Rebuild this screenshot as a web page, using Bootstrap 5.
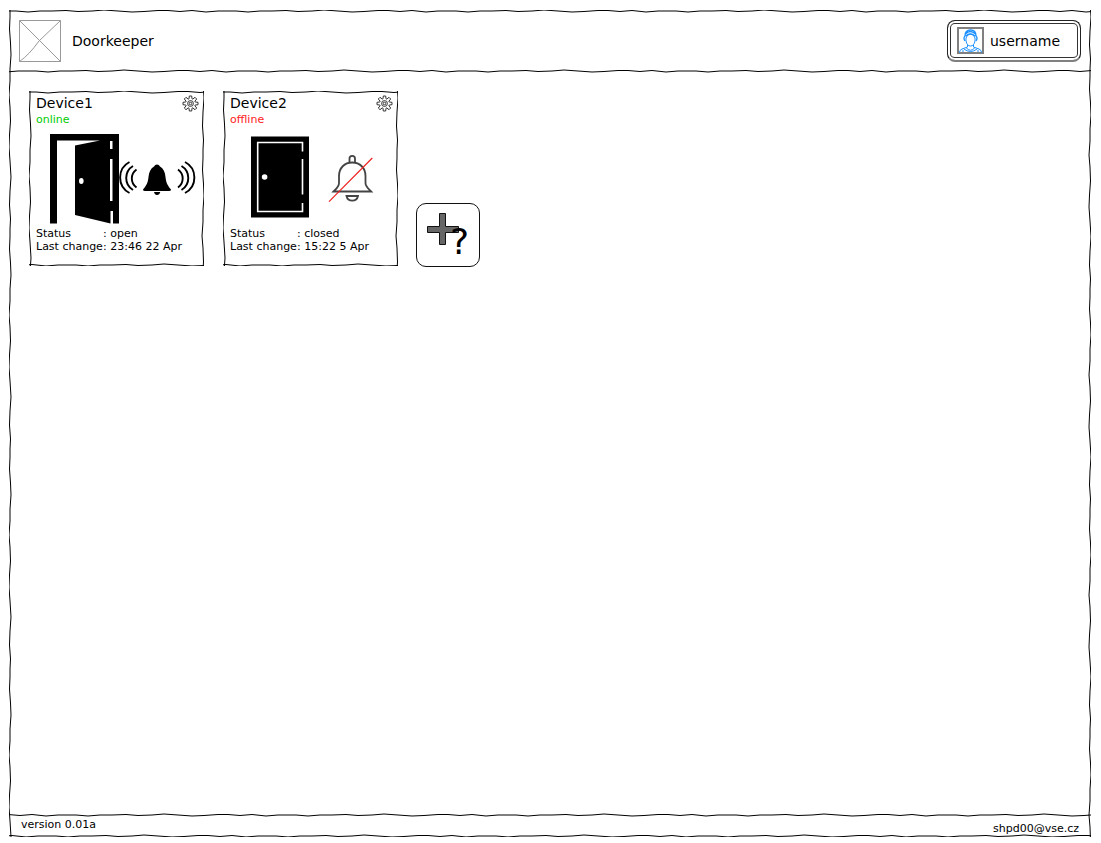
<!DOCTYPE html>
<html lang="en">
<head>
<meta charset="utf-8">
<meta name="viewport" content="width=device-width, initial-scale=1">
<title>Doorkeeper</title>
<link href="https://cdn.jsdelivr.net/npm/bootstrap@5.3.0/dist/css/bootstrap.min.css" rel="stylesheet">
<style>
  :root {
    --wave-h: url("data:image/svg+xml,%3Csvg xmlns='http://www.w3.org/2000/svg' width='220' height='4'%3E%3Cpath d='M0 2H8L20 3L32 2H44L58 1.500L70 2.500L84 2L96 1L110 2L124 3L136 2.500L150 1.500H160L172 2.500L184 1.500L198 3L210 2H220' fill='none' stroke='black'/%3E%3C/svg%3E");
    --wave-v: url("data:image/svg+xml,%3Csvg xmlns='http://www.w3.org/2000/svg' width='4' height='220'%3E%3Cpath d='M2 0V8L1.500 20L2.500 34L3 46L2 60V72L1 86L2 98L2.500 112L1.500 126L1 138L2 152L3 168L2 182L1.500 196L2.500 210L2 220' fill='none' stroke='black'/%3E%3C/svg%3E");
  }
  body { font-family: "DejaVu Sans", Verdana, sans-serif; font-size: 14px; line-height: 18px; color: #000; background: #fff; }
  .page-shell { padding: 9px 9px 5px 8px; }
  .sketch-box { background: var(--wave-h) repeat-x 0 0, var(--wave-h) repeat-x 40px 100%, var(--wave-v) repeat-y 0 0, var(--wave-v) repeat-y 100% 60px; clip-path: inset(1px); }
  .top-bar { min-height: 64px; padding: 11px 11px 9px 10px; background: var(--wave-h) repeat-x 20px 100%; }
  .brand { gap: 10px; }
  .bottom-bar { min-height: 25px; padding: 5px 13px 3px; font-size: 11px; line-height: 13px; background: var(--wave-h) repeat-x 60px 0; }
  .bottom-bar a { color: #000; }
  .device-area { padding: 17px 20px; gap: 17px; }
  .device { width: 177px; min-height: 177px; padding-top: 4px; }
  .device-head { padding: 0 6px 0 8px; }
  .device-name { font-size: 14px; line-height: 18px; }
  .device-state { font-size: 11px; line-height: 15px; }
  .is-online { color: #0c0; }
  .is-offline { color: #f22; }
  .device-facts { padding-left: 8px; font-size: 11px; line-height: 13px; }
  .fact-name { width: 67px; }
  .plain-btn { background: none; border: 0; padding: 0; color: #000; }
  .user-btn { width: 134px; height: 42px; padding: 0 9px; gap: 6px; border: 1px solid #222; border-bottom: 2px solid #808080; border-radius: 8px; box-shadow: inset 0 0 0 2px #fff, inset 0 0 0 3px #333; }
  .add-btn { width: 64px; height: 64px; border: 1px solid #111; border-radius: 10px; }
</style>
</head>
<body>
<div class="page-shell min-vh-100 d-flex flex-column">
  <div class="sketch-box flex-grow-1 d-flex flex-column">
    <header class="top-bar d-flex justify-content-between align-items-start">
      <div class="brand d-flex align-items-center">
        <svg width="44" height="42" viewBox="0 0 44 42" fill="none" stroke="#999" role="img" aria-label="Logo">
          <path d="M1.500 .500H42.500V41.500H1.500ZM1.500 .500L42.500 41.500M42.500 .500L21 21Q11 35 1.500 41.500"/>
        </svg>
        <span>Doorkeeper</span>
      </div>
      <button type="button" class="plain-btn user-btn d-flex align-items-center">
        <svg width="27" height="27" viewBox="0 0 27 27" fill="none" stroke="#1c90ff" aria-hidden="true">
          <path d="M1 1H26V26H1Z" stroke="#808080" stroke-width="2"/>
          <path d="M9 11Q10 7 13.500 7Q17 7 18 11V14Q17 19 13.500 19Q10 19 9 14Z"/>
          <path d="M8 14Q6 11 8 9Q8 3 13.500 3Q19 3 19 9Q21 11 19 14M9 9Q13 5 18 9M8.500 7Q13 2 18.500 7" stroke-width="1.300"/>
          <path d="M10.500 18V20L5 22Q2.500 23 2.500 25.500M16.500 18V20L22 22Q24.500 23 24.500 25.500M9 20.500Q13.500 26 18 20.500M6 25V23M21 25V23M7 22Q13.500 27 20 22"/>
        </svg>
        <span>username</span>
      </button>
    </header>

    <main class="device-area flex-grow-1 d-flex flex-wrap align-items-end align-content-start">
      <section class="device sketch-box">
        <div class="device-head d-flex justify-content-between align-items-start">
          <h2 class="device-name m-0 fw-normal">Device1</h2>
          <button type="button" class="plain-btn d-flex" aria-label="Device1 settings">
            <svg width="17" height="18" viewBox="-8.500 -9.500 17 18" fill="none" stroke="#333"><use href="#gear"/></svg>
          </button>
        </div>
        <div class="device-state is-online px-2">online</div>
        <svg class="d-block" width="177" height="100" viewBox="28 127 177 100" role="img" aria-label="Open door, alarm ringing">
          <path d="M50 134H119V223.500H113V211H110.500V223.500L75 215V145.500L100 140.500H57V223.500H50Z"/>
          <path d="M110 141H112.500V149H110ZM110 159H112.500V201H110Z" fill="#fff"/>
          <ellipse cx="81.300" cy="181" rx="2.300" ry="3" fill="#fff"/>
          <path d="M157 164.500Q159 164.500 160 166.500C163.500 168.500 165 172 165.500 177C166 183 168 186 171 189.500Q171 191 169 191H145Q143 191 143 189.500C146 186 148 183 148.500 177C149 172 150.500 168.500 154 166.500Q155 164.500 157 164.500ZM154 192H160.300Q159.500 195 157 195Q154.700 195 154 192Z"/>
          <g fill="none" stroke="#000" stroke-width="1.900">
            <path d="M129.500 162A17.500 17.500 0 0 0 129.500 193M133 166A14 14 0 0 0 133 190M136.500 169.500A11 11 0 0 0 136.500 187.500"/>
            <path d="M185 162A17.500 17.500 0 0 1 185 193M181.500 166A14 14 0 0 1 181.500 190M178 169.500A11 11 0 0 1 178 187.500"/>
          </g>
        </svg>
        <dl class="device-facts m-0">
          <div class="d-flex"><dt class="fact-name fw-normal">Status</dt><dd class="m-0">: open</dd></div>
          <div class="d-flex"><dt class="fact-name fw-normal">Last change</dt><dd class="m-0">: 23:46 22 Apr</dd></div>
        </dl>
      </section>

      <section class="device sketch-box">
        <div class="device-head d-flex justify-content-between align-items-start">
          <h2 class="device-name m-0 fw-normal">Device2</h2>
          <button type="button" class="plain-btn d-flex" aria-label="Device2 settings">
            <svg width="17" height="18" viewBox="-8.500 -9.500 17 18" fill="none" stroke="#333"><use href="#gear"/></svg>
          </button>
        </div>
        <div class="device-state is-offline px-2">offline</div>
        <svg class="d-block" width="177" height="100" viewBox="222 127 177 100" role="img" aria-label="Closed door, alarm off">
          <path d="M251 136.500H309V217.500H251Z"/>
          <path d="M302.500 151.500V142.500H257.700V211.500H302.500V203M302.500 159V194.500" fill="none" stroke="#fff" stroke-width="1.600"/>
          <circle cx="264.600" cy="177" r="2.800" fill="#fff"/>
          <g fill="none" stroke="#444" stroke-width="1.800">
            <path d="M349.500 163V158.500Q349.500 155.800 352.200 155.800Q355 155.800 355 158.500V163"/>
            <path d="M352.200 162.500C360 162.500 365.500 168 365.500 176V183C365.500 187 369 189 371.300 191.500H333.500C336 189 339 187 339 183V176C339 168 344.500 162.500 352.200 162.500Z"/>
            <path d="M346.500 196H358Q357 200.700 352.200 200.700Q347.500 200.700 346.500 196Z"/>
          </g>
          <path d="M329 201.700L372.300 158" stroke="#e22" stroke-width="1.200"/>
        </svg>
        <dl class="device-facts m-0">
          <div class="d-flex"><dt class="fact-name fw-normal">Status</dt><dd class="m-0">: closed</dd></div>
          <div class="d-flex"><dt class="fact-name fw-normal">Last change</dt><dd class="m-0">: 15:22 5 Apr</dd></div>
        </dl>
      </section>

      <button type="button" class="plain-btn add-btn" aria-label="Add device">
        <svg class="d-block" width="62" height="62" viewBox="417 204 62 62">
          <path d="M439.500 213.500H445.500V226.500H458.500V232.500H445.500V244.500H439.500V232.500H427.500V226.500H439.500Z" fill="#666" stroke="#111"/>
          <text x="450" y="254" font-size="36">?</text>
        </svg>
      </button>
    </main>

    <footer class="bottom-bar d-flex justify-content-between">
      <span>version 0.01a</span>
      <a class="text-decoration-none align-self-end" href="mailto:shpd00@vse.cz">shpd00@vse.cz</a>
    </footer>
  </div>
</div>
<svg class="position-absolute" width="0" height="0" aria-hidden="true">
  <defs>
    <g id="gear">
      <path d="M-1.200 -7.500H1.200L1.500 -4.700L2.300 -4.400L4.500 -6.200L6.200 -4.500L4.400 -2.300L4.700 -1.500L7.500 -1.200V1.200L4.700 1.500L4.400 2.300L6.200 4.500L4.500 6.200L2.300 4.400L1.500 4.700L1.200 7.500H-1.200L-1.500 4.700L-2.300 4.400L-4.500 6.200L-6.200 4.500L-4.400 2.300L-4.700 1.500L-7.500 1.200V-1.200L-4.700 -1.500L-4.400 -2.300L-6.200 -4.500L-4.500 -6.200L-2.300 -4.400L-1.500 -4.700Z"/>
      <circle r="2.900"/><circle r="1.300"/>
    </g>
  </defs>
</svg>
<script src="https://cdn.jsdelivr.net/npm/bootstrap@5.3.0/dist/js/bootstrap.bundle.min.js"></script>
</body>
</html>
